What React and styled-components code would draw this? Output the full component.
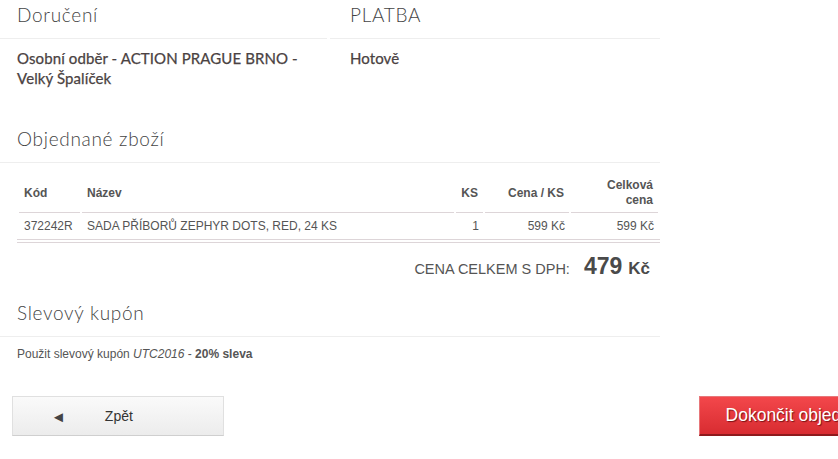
import React from 'react';
import styled, { createGlobalStyle } from 'styled-components';

const GlobalStyle = createGlobalStyle`
  html, body {
    margin: 0;
    padding: 0;
    background: #fff;
    overflow: hidden;
  }
  body {
    font-family: "Liberation Sans", Arial, sans-serif;
    color: #555;
  }
`;

const items = [
  {
    code: '372242R',
    name: 'SADA PŘÍBORŮ ZEPHYR DOTS, RED, 24 KS',
    qty: 1,
    price: '599 Kč',
    total: '599 Kč',
  },
];

const App = () => {
  return (
    <>
      <GlobalStyle />
      <Page>
        <Summary>
          <Column>
            <Heading>Doručení</Heading>
            <Detail>Osobní odběr - ACTION PRAGUE BRNO - Velký Špalíček</Detail>
          </Column>
          <Column wide>
            <Heading>PLATBA</Heading>
            <Detail>Hotově</Detail>
          </Column>
        </Summary>

        <Section>
          <Heading>Objednané zboží</Heading>
          <TableWrap>
            <Table>
              <colgroup>
                <col style={{ width: 61 }} />
                <col />
                <col style={{ width: 27 }} />
                <col style={{ width: 84 }} />
                <col style={{ width: 87 }} />
              </colgroup>
              <thead>
                <tr>
                  <Th>Kód</Th>
                  <Th>Název</Th>
                  <Th right>KS</Th>
                  <Th right>Cena / KS</Th>
                  <Th right narrow>Celková cena</Th>
                </tr>
              </thead>
              <tbody>
                {items.map((item) => (
                  <tr key={item.code}>
                    <Td>{item.code}</Td>
                    <Td>{item.name}</Td>
                    <Td right>{item.qty}</Td>
                    <Td right>{item.price}</Td>
                    <Td right>{item.total}</Td>
                  </tr>
                ))}
              </tbody>
            </Table>
          </TableWrap>
          <Total>
            <TotalLabel>Cena celkem s DPH:</TotalLabel>
            <TotalValue>479</TotalValue>
            <TotalCurrency>Kč</TotalCurrency>
          </Total>
        </Section>

        <Section>
          <Heading>Slevový kupón</Heading>
          <Coupon>
            Použit slevový kupón <em>UTC2016</em> - <strong>20% sleva</strong>
          </Coupon>
        </Section>
      </Page>

      <Actions>
        <BackButton>
          <Arrow>◄</Arrow>
          Zpět
        </BackButton>
        <FinishButton>Dokončit objednávku</FinishButton>
      </Actions>
    </>
  );
};

export default App;

const Page = styled.div`
  width: 660px;
`;

const Summary = styled.div`
  display: grid;
  grid-template-columns: 327px 330px;
  gap: 3px;
`;

const Column = styled.div`
  & > h3,
  & > p {
    padding-left: ${(p) => (p.wide ? '20px' : '17px')};
  }
`;

const Heading = styled.h3`
  margin: 0;
  padding: 3px 0 11px 17px;
  font-family: Lato, "Open Sans", sans-serif;
  font-weight: 300;
  font-size: 19px;
  line-height: 24px;
  letter-spacing: 0.7px;
  color: #444;
  border-bottom: 1px solid #eee;
`;

const Detail = styled.p`
  margin: 0;
  padding-top: 9px;
  width: 292px;
  font-family: Lato, "Open Sans", sans-serif;
  font-weight: 400;
  font-size: 15px;
  line-height: 20px;
  letter-spacing: 0.1px;
  color: #4a4242;
  -webkit-text-stroke: 0.25px #4a4242;
`;

const Section = styled.section`
  margin-top: 36px;

  & + & {
    margin-top: 0;
  }
`;

const TableWrap = styled.div`
  margin: 11px 0 0 17px;
  border-bottom: 4px double #ddd5d8;
`;

const Table = styled.table`
  width: 100%;
  table-layout: fixed;
  border-collapse: separate;
  border-spacing: 2px 0;
  font-size: 12px;
  line-height: 15px;
  color: #555;
`;

const Th = styled.th`
  padding: 4px 5px 4px ${(p) => (p.narrow ? '24px' : '5px')};
  font-weight: 700;
  text-align: ${(p) => (p.right ? 'right' : 'left')};
  vertical-align: middle;
  border-bottom: 1px solid #ddd5d8;
`;

const Td = styled.td`
  padding: 6px ${(p) => (p.right ? '4px' : '5px')} 5px 5px;
  text-align: ${(p) => (p.right ? 'right' : 'left')};
  white-space: nowrap;
`;

const Total = styled.div`
  display: flex;
  justify-content: flex-end;
  align-items: baseline;
  padding: 8px 10px 14px 0;
  line-height: 30px;
  color: #555;
`;

const TotalLabel = styled.span`
  font-size: 14.5px;
  text-transform: uppercase;
  margin-right: 14px;
`;

const TotalValue = styled.span`
  font-size: 23px;
  font-weight: 700;
  color: #4a4a4a;
  margin-right: 6px;
`;

const TotalCurrency = styled.span`
  font-size: 17px;
  font-weight: 700;
  color: #4a4a4a;
`;

const Coupon = styled.p`
  margin: 0;
  padding: 10px 0 0 17px;
  font-size: 12px;
  line-height: 15px;
  color: #555;

  em {
    font-style: italic;
  }
`;

const Actions = styled.div`
  display: flex;
  align-items: flex-start;
  justify-content: space-between;
  width: 903px;
  margin-top: 34px;
  padding-left: 12px;
`;

const BackButton = styled.button`
  display: flex;
  align-items: center;
  width: 212px;
  height: 40px;
  padding: 0 0 0 38px;
  background: linear-gradient(#fafafa, #ececec);
  border: 1px solid #e0e0e0;
  border-bottom-color: #cfcfcf;
  font-family: "Liberation Sans", Arial, sans-serif;
  font-size: 14px;
  color: #333;
  cursor: pointer;
`;

const Arrow = styled.span`
  font-size: 15px;
  color: #444;
  margin-right: 39px;
`;

const FinishButton = styled.button`
  height: 40px;
  padding: 0 26px 0 26px;
  background: linear-gradient(#f3474b, #d82c31);
  border: 1px solid #e7777a;
  border-bottom: 2px solid #8e1a1d;
  font-family: "Liberation Sans", Arial, sans-serif;
  font-size: 17.5px;
  color: #fff;
  text-shadow: 1px 1px 1px #7a1215;
  white-space: nowrap;
  cursor: pointer;
`;
